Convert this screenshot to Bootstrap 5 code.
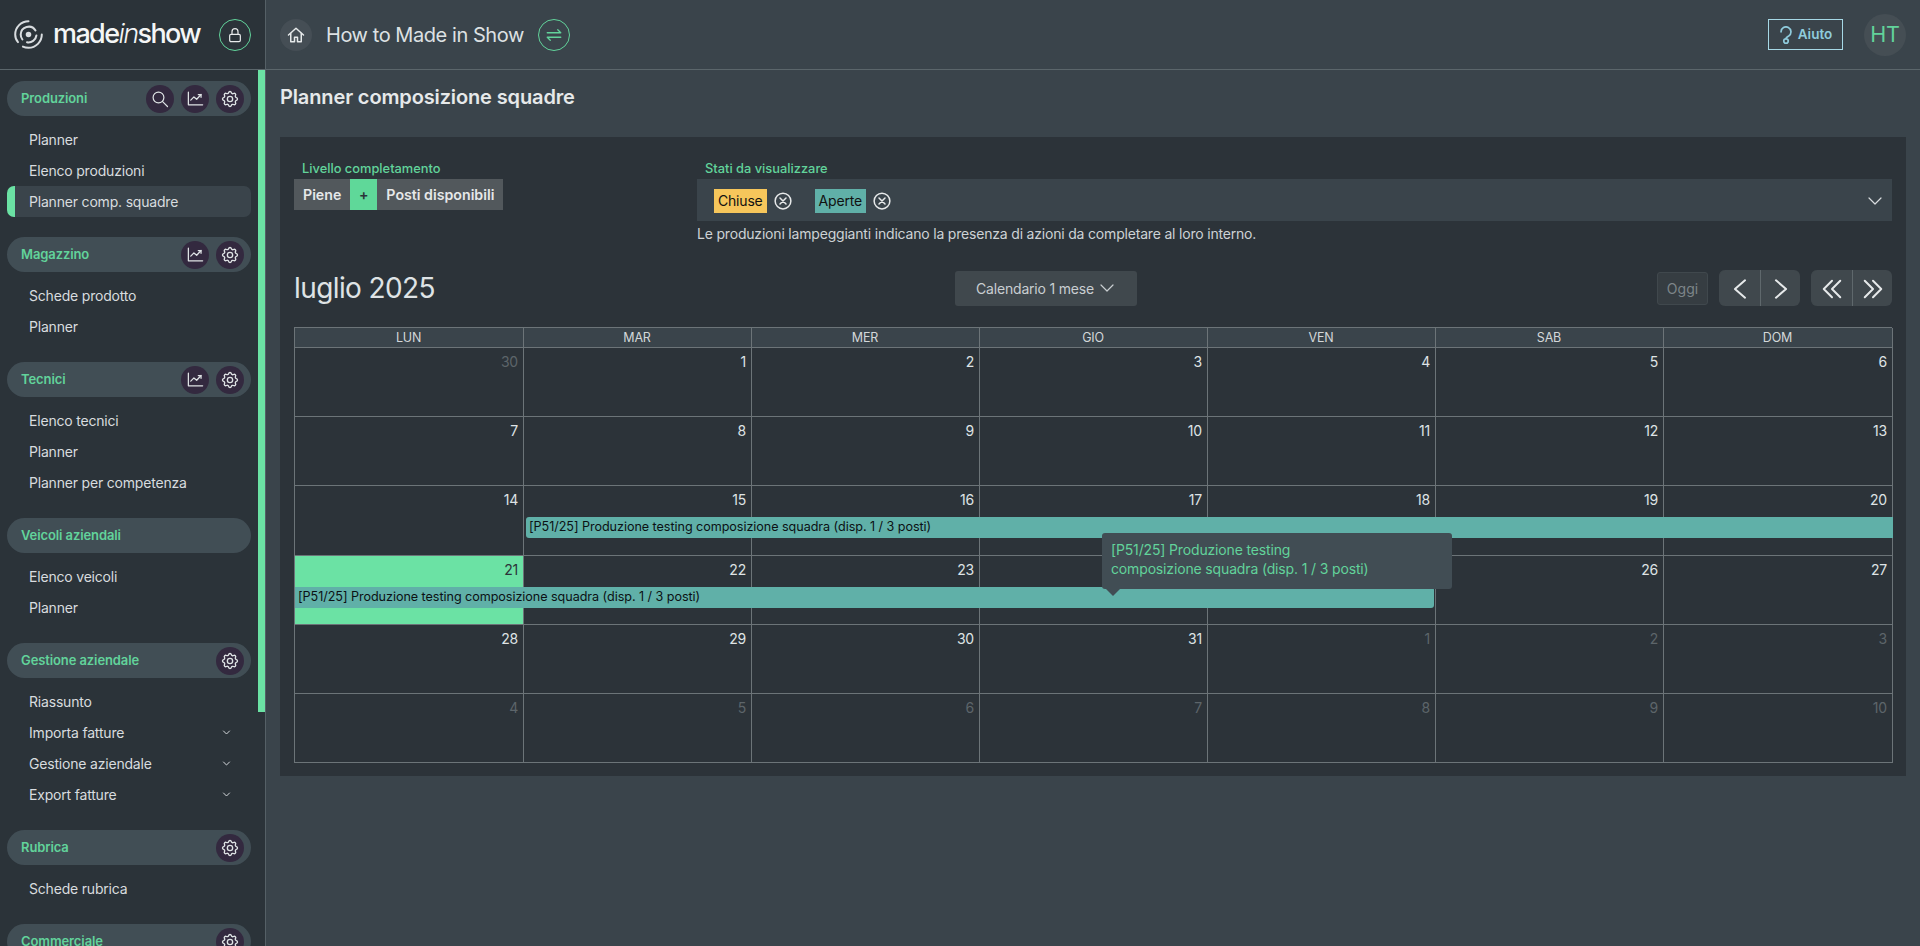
<!DOCTYPE html>
<html lang="it">
<head>
    <meta charset="UTF-8">
    <title>Planner composizione squadre</title>
    <link href="https://cdn.jsdelivr.net/npm/bootstrap@5.3.0/dist/css/bootstrap.min.css" rel="stylesheet">
    <style>
        body { background: #3a444b; color: #d8dcdf; font-family: Inter, "Liberation Sans", sans-serif; font-size: 14px; letter-spacing: -0.19px; height: 946px; overflow: hidden; }
        .ico { fill: none; stroke: currentColor; stroke-width: 1.6; stroke-linecap: round; stroke-linejoin: round; flex: none; }

        /* Sidebar */
        .side-col { width: 266px; height: 946px; background: #2b3339; border-right: 1px solid #556066; flex: none; overflow: hidden; }
        .side-top { height: 70px; border-bottom: 1px solid #5b666b; padding: 0 14px 0 14px; }
        .brand-name { font-size: 27px; font-weight: 500; color: #f4f6f6; letter-spacing: -1.6px; margin-left: 10px; line-height: 1; padding-bottom: 3px; }
        .brand-name i { font-weight: 300; }
        .round-line { width: 32px; height: 32px; border-radius: 50%; border: 1px solid #62d39b; }
        .side-thumb { width: 7px; height: 642px; background: #6be2a4; flex: none; }
        .side-list { width: 258px; padding: 11px 7px 0 7px; flex: none; }
        .sec-pill { height: 35px; border-radius: 18px; background: #414e55; padding: 0 7px 0 14px; gap: 7px; margin-top: 20px; }
        .sec-pill:first-child { margin-top: 0; }
        .sec-name { font-size: 13px; font-weight: 600; color: #62d39b; margin-right: auto; letter-spacing: -0.1px; }
        .sec-btn { width: 28px; height: 28px; border-radius: 50%; background: #33293f; color: #dfe3e5; }
        .sec-items { margin-top: 8px; }
        .sec-link { height: 31px; padding-left: 22px; padding-right: 20px; color: #d8dcdf; }
        .sec-link.on { background: #3a444b; border-left: 8px solid #6be2a4; border-radius: 7px; padding-left: 14px; }

        /* Header */
        .top-bar { height: 70px; border-bottom: 1px solid #5b666b; padding: 0 14px 0 14px; }
        .home-round { width: 32px; height: 32px; border-radius: 50%; background: #454e55; color: #e6e9ea; }
        .top-title { font-size: 20px; letter-spacing: -0.44px; color: #dde1e3; margin: 0 14px 0 14px; font-weight: 400; }
        .help-btn { width: 75px; height: 31px; border: 1px solid #a6d9e6; color: #8fcbdc; font-size: 13.5px; font-weight: 600; gap: 5px; margin-right: 21px; letter-spacing: 0; }
        .user-round { width: 42px; height: 42px; border-radius: 50%; background: #454e54; color: #62d39b; font-size: 21.5px; }

        /* Main card */
        .page-title { font-size: 20px; letter-spacing: -0.13px; font-weight: 600; color: #e6e9ea; margin: 0; padding: 15px 14px 0 14px; height: 67px; line-height: 24px; }
        .main-panel { margin: 0 14px; height: 639px; background: #2c3339; padding: 24px 14px 0 14px; }
        .filter-left { width: 403px; flex: none; }
        .filter-right { flex: 1; }
        .field-label { font-size: 12.85px; font-weight: 500; letter-spacing: 0; color: #62d39b; height: 18px; line-height: 16px; padding-left: 8px; }
        .toggle-part { height: 31px; background: #52585c; color: #e6e8e9; font-size: 14.2px; letter-spacing: 0; font-weight: 600; padding: 0 9px; }
        .toggle-plus { width: 27px; background: #5fd899; color: #2c3339; justify-content: center; padding: 0; }
        .pick-box { height: 42px; background: #3a444b; padding: 1px 8px 0 17px; }
        .state-tag { height: 24px; color: #111; font-size: 14px; padding: 0 4px; }
        .state-tag.t-closed { background: #f6c65b; }
        .state-tag.t-open { background: #60b0a8; }
        .x-gap { margin: 0 23px 0 7px; color: #e8eaeb; stroke-width: 2; }
        .hint-line { line-height: 20px; margin-top: 3px; color: #cdd2d5; }

        .cal-bar { margin-top: 26px; height: 36px; margin-bottom: 21px; }
        .cal-month { width: 661px; font-size: 28px; letter-spacing: -0.6px; font-weight: 400; color: #dfe3e5; margin: 0; padding-top: 2px; }
        .btn.view-btn { width: 182px; height: 35px; background: #40484d; border: 0; color: #c9ced1; font-size: 14px; letter-spacing: -0.19px; border-radius: 3px; }
        .btn.today-btn { width: 51px; height: 33px; padding: 0; background: #363d42; border: 1px solid #40484d; color: #7d8589; font-size: 14px; opacity: 1; border-radius: 3px; margin-right: 11px; }
        .nav-pair { margin-right: 11px; }
        .nav-pair:last-child { margin-right: 0; }
        .btn-group .btn.nav-btn { width: 41px; height: 36px; padding: 0; background: #40484d; border: 0; border-left: 1px solid #40484d; color: #e6e9ea; }
        .btn-group .btn.nav-btn + .btn.nav-btn { border-left: 1px solid #5f686c; margin-left: 0; width: 40px; }

        .cal-wrap { position: relative; border-left: 1px solid #6c7478; border-top: 1px solid #6c7478; width: 1598px; }
        .cal-line { display: grid; grid-template-columns: 229px repeat(5, 228px) 229px; }
        .cal-head { height: 20px; background: #3a444b; text-align: center; font-size: 12.5px; line-height: 20px; padding-right: 1px; color: #d3d7d9; border-right: 1px solid #6c7478; border-bottom: 1px solid #6c7478; }
        .cal-day { grid-row: 1; height: 69.2px; border-right: 1px solid #6c7478; border-bottom: 1px solid #6c7478; text-align: right; padding: 5px 5px 0 0; font-size: 14px; line-height: 18px; color: #dfe3e5; }
        .cal-day:nth-child(1) { grid-column: 1; }
        .cal-day:nth-child(2) { grid-column: 2; }
        .cal-day:nth-child(3) { grid-column: 3; }
        .cal-day:nth-child(4) { grid-column: 4; }
        .cal-day:nth-child(5) { grid-column: 5; }
        .cal-day:nth-child(6) { grid-column: 6; }
        .cal-day:nth-child(7) { grid-column: 7; }
        .cal-day.off { color: #5d656a; }
        .cal-day.now { background: #6be2a4; color: #2c3339; }
        .cal-event { grid-row: 1; height: 21px; margin-top: 31px; background: #60b0a8; color: #0c1114; font-size: 12.6px; letter-spacing: -0.05px; line-height: 20px; padding-left: 3px; white-space: nowrap; align-self: start; z-index: 1; }
        .ev-one { grid-column: 2 / 8; margin-left: 2px; border-radius: 3px 0 0 3px; }
        .ev-two { grid-column: 1 / 6; margin-right: 2px; border-radius: 0 3px 3px 0; }
        .cal-tip { position: absolute; left: 807px; top: 205px; width: 350px; height: 56px; background: #414d54; color: #62d39b; font-size: 14px; letter-spacing: -0.15px; line-height: 19px; padding: 7px 9px; border-radius: 3px; z-index: 2; }
        .cal-tip::after { content: ""; position: absolute; left: 4px; bottom: -7px; border: 7px solid transparent; border-bottom: 0; border-top-color: #414d54; }
    </style>
</head>
<body>
    <svg width="0" height="0" class="position-absolute">
        <symbol id="i-gear" viewBox="0 0 24 24"><path d="M10.325 4.317c.426 -1.756 2.924 -1.756 3.35 0a1.724 1.724 0 0 0 2.573 1.066c1.543 -.94 3.31 .826 2.37 2.37a1.724 1.724 0 0 0 1.065 2.572c1.756 .426 1.756 2.924 0 3.35a1.724 1.724 0 0 0 -1.066 2.573c.94 1.543 -.826 3.31 -2.37 2.37a1.724 1.724 0 0 0 -2.572 1.065c-.426 1.756 -2.924 1.756 -3.35 0a1.724 1.724 0 0 0 -2.573 -1.066c-1.543 .94 -3.31 -.826 -2.37 -2.37a1.724 1.724 0 0 0 -1.065 -2.572c-1.756 -.426 -1.756 -2.924 0 -3.35a1.724 1.724 0 0 0 1.066 -2.573c-.94 -1.543 .826 -3.31 2.37 -2.37c1 .608 2.296 .07 2.572 -1.065z"/><circle cx="12" cy="12" r="3.2"/></symbol>
        <symbol id="i-chart" viewBox="0 0 24 24"><path d="M3 4v16h18"/><path d="M6 14l4-4 3.500 3 5.500-6"/><path d="M15.500 7H19v3.500"/></symbol>
        <symbol id="i-search" viewBox="0 0 24 24"><circle cx="10" cy="10" r="7.2"/><path d="M15.500 15.500L22 22"/></symbol>
        <symbol id="i-x" viewBox="0 0 24 24"><circle cx="12" cy="12" r="10.500"/><path d="M8 8l8 8M16 8l-8 8"/></symbol>
        <symbol id="i-down" viewBox="0 0 24 24"><path d="M4 8l8 8 8-8"/></symbol>
    </svg>

    <div class="d-flex">
        <!-- Sidebar -->
        <aside class="side-col">
            <div class="side-top d-flex align-items-center">
                <svg width="29" height="29" viewBox="0 0 29 29" class="ico" style="stroke-width:2"><path d="M14.500 1.200A13.300 13.300 0 0 0 1.200 14.500c0 3.200 1 5.600 2.800 7.600"/><path d="M27.800 14.500a13.300 13.300 0 0 1-13.300 13.300c-2.200 0-4-.4-5.600-1.200"/><path d="M21.500 10.500a8 8 0 0 0-14.800 4c0 2 .6 3.600 1.700 5"/><path d="M22.400 15.500a8 8 0 0 1-9.400 6.800"/><circle cx="14.500" cy="14.500" r="1.800" fill="currentColor"/></svg>
                <span class="brand-name">made<i>in</i>show</span>
                <span class="round-line d-flex align-items-center justify-content-center ms-auto" style="color:#e8eaeb">
                    <svg width="16" height="16" viewBox="0 0 24 24" class="ico" style="stroke-width:1.8"><rect x="4" y="11" width="16" height="11" rx="2"/><path d="M7.500 11V7a4.500 4.500 0 0 1 9 0v4"/></svg>
                </span>
            </div>
            <div class="d-flex">
                <nav class="side-list">
                    <div class="sec-pill d-flex align-items-center">
                        <span class="sec-name">Produzioni</span>
                        <span class="sec-btn d-flex align-items-center justify-content-center"><svg width="18" height="18" class="ico"><use href="#i-search"/></svg></span>
                        <span class="sec-btn d-flex align-items-center justify-content-center"><svg width="19" height="19" class="ico"><use href="#i-chart"/></svg></span>
                        <span class="sec-btn d-flex align-items-center justify-content-center"><svg width="20" height="20" class="ico"><use href="#i-gear"/></svg></span>
                    </div>
                    <div class="sec-items">
                        <div class="sec-link d-flex align-items-center">Planner</div>
                        <div class="sec-link d-flex align-items-center">Elenco produzioni</div>
                        <div class="sec-link on d-flex align-items-center">Planner comp. squadre</div>
                    </div>

                    <div class="sec-pill d-flex align-items-center">
                        <span class="sec-name">Magazzino</span>
                        <span class="sec-btn d-flex align-items-center justify-content-center"><svg width="19" height="19" class="ico"><use href="#i-chart"/></svg></span>
                        <span class="sec-btn d-flex align-items-center justify-content-center"><svg width="20" height="20" class="ico"><use href="#i-gear"/></svg></span>
                    </div>
                    <div class="sec-items">
                        <div class="sec-link d-flex align-items-center">Schede prodotto</div>
                        <div class="sec-link d-flex align-items-center">Planner</div>
                    </div>

                    <div class="sec-pill d-flex align-items-center">
                        <span class="sec-name">Tecnici</span>
                        <span class="sec-btn d-flex align-items-center justify-content-center"><svg width="19" height="19" class="ico"><use href="#i-chart"/></svg></span>
                        <span class="sec-btn d-flex align-items-center justify-content-center"><svg width="20" height="20" class="ico"><use href="#i-gear"/></svg></span>
                    </div>
                    <div class="sec-items">
                        <div class="sec-link d-flex align-items-center">Elenco tecnici</div>
                        <div class="sec-link d-flex align-items-center">Planner</div>
                        <div class="sec-link d-flex align-items-center">Planner per competenza</div>
                    </div>

                    <div class="sec-pill d-flex align-items-center">
                        <span class="sec-name">Veicoli aziendali</span>
                    </div>
                    <div class="sec-items">
                        <div class="sec-link d-flex align-items-center">Elenco veicoli</div>
                        <div class="sec-link d-flex align-items-center">Planner</div>
                    </div>

                    <div class="sec-pill d-flex align-items-center">
                        <span class="sec-name">Gestione aziendale</span>
                        <span class="sec-btn d-flex align-items-center justify-content-center"><svg width="20" height="20" class="ico"><use href="#i-gear"/></svg></span>
                    </div>
                    <div class="sec-items">
                        <div class="sec-link d-flex align-items-center">Riassunto</div>
                        <div class="sec-link d-flex align-items-center justify-content-between">Importa fatture <svg width="9" height="9" class="ico" style="stroke-width:2.6"><use href="#i-down"/></svg></div>
                        <div class="sec-link d-flex align-items-center justify-content-between">Gestione aziendale <svg width="9" height="9" class="ico" style="stroke-width:2.6"><use href="#i-down"/></svg></div>
                        <div class="sec-link d-flex align-items-center justify-content-between">Export fatture <svg width="9" height="9" class="ico" style="stroke-width:2.6"><use href="#i-down"/></svg></div>
                    </div>

                    <div class="sec-pill d-flex align-items-center">
                        <span class="sec-name">Rubrica</span>
                        <span class="sec-btn d-flex align-items-center justify-content-center"><svg width="20" height="20" class="ico"><use href="#i-gear"/></svg></span>
                    </div>
                    <div class="sec-items">
                        <div class="sec-link d-flex align-items-center">Schede rubrica</div>
                    </div>

                    <div class="sec-pill d-flex align-items-center">
                        <span class="sec-name">Commerciale</span>
                        <span class="sec-btn d-flex align-items-center justify-content-center"><svg width="20" height="20" class="ico"><use href="#i-gear"/></svg></span>
                    </div>
                </nav>
                <div class="side-thumb"></div>
            </div>
        </aside>

        <!-- Main -->
        <div class="flex-grow-1">
            <header class="top-bar d-flex align-items-center">
                <span class="home-round d-flex align-items-center justify-content-center">
                    <svg width="18" height="18" viewBox="0 0 24 24" class="ico" style="stroke-width:2"><path d="M2 12L12 3l10 9"/><path d="M5 10v11h5v-6h4v6h5V10"/></svg>
                </span>
                <span class="top-title">How to Made in Show</span>
                <span class="round-line d-flex align-items-center justify-content-center" style="color:#62d39b">
                    <svg width="18" height="18" viewBox="0 0 24 24" class="ico" style="stroke-width:1.8"><path d="M3 9h18M17 5l4 4M21 15H3M7 19l-4-4"/></svg>
                </span>
                <span class="help-btn d-flex align-items-center justify-content-center ms-auto">
                    <svg width="14" height="18" viewBox="0 0 14 20" class="ico" style="stroke-width:1.9"><path d="M1.500 6.500a5.500 5.500 0 1 1 8.500 4.600C8 12.300 7 12.800 7 14"/><circle cx="7" cy="16.800" r="2.500"/></svg>
                    Aiuto
                </span>
                <span class="user-round d-flex align-items-center justify-content-center">HT</span>
            </header>

            <h1 class="page-title">Planner composizione squadre</h1>

            <section class="main-panel">
                <div class="d-flex">
                    <div class="filter-left">
                        <div class="field-label">Livello completamento</div>
                        <div class="d-flex">
                            <span class="toggle-part d-flex align-items-center">Piene</span>
                            <span class="toggle-part toggle-plus d-flex align-items-center">+</span>
                            <span class="toggle-part d-flex align-items-center">Posti disponibili</span>
                        </div>
                    </div>
                    <div class="filter-right">
                        <div class="field-label">Stati da visualizzare</div>
                        <div class="pick-box d-flex align-items-center">
                            <span class="state-tag t-closed d-flex align-items-center">Chiuse</span>
                            <svg width="18" height="18" class="ico x-gap"><use href="#i-x"/></svg>
                            <span class="state-tag t-open d-flex align-items-center">Aperte</span>
                            <svg width="18" height="18" class="ico x-gap"><use href="#i-x"/></svg>
                            <svg width="18" height="18" class="ico ms-auto" style="color:#d8dcdf"><use href="#i-down"/></svg>
                        </div>
                        <div class="hint-line">Le produzioni lampeggianti indicano la presenza di azioni da completare al loro interno.</div>
                    </div>
                </div>

                <div class="cal-bar d-flex align-items-center">
                    <h2 class="cal-month">luglio 2025</h2>
                    <button class="btn view-btn d-flex align-items-center justify-content-center gap-1" type="button">Calendario 1 mese <svg width="18" height="18" class="ico"><use href="#i-down"/></svg></button>
                    <div class="ms-auto d-flex align-items-center">
                        <button class="btn today-btn" type="button" disabled>Oggi</button>
                        <div class="btn-group nav-pair">
                            <button class="btn nav-btn" type="button"><svg width="22" height="22" viewBox="0 0 24 24" class="ico" style="stroke-width:2.2"><path d="M17.500 2.500L6.500 12l11 9.500"/></svg></button>
                            <button class="btn nav-btn" type="button"><svg width="22" height="22" viewBox="0 0 24 24" class="ico" style="stroke-width:2.2"><path d="M6.500 2.500l11 9.500-11 9.500"/></svg></button>
                        </div>
                        <div class="btn-group nav-pair">
                            <button class="btn nav-btn" type="button"><svg width="22" height="22" viewBox="0 0 24 24" class="ico" style="stroke-width:2.2"><path d="M12 3l-9 9 9 9M21 3l-9 9 9 9"/></svg></button>
                            <button class="btn nav-btn" type="button"><svg width="22" height="22" viewBox="0 0 24 24" class="ico" style="stroke-width:2.2"><path d="M3 3l9 9-9 9M12 3l9 9-9 9"/></svg></button>
                        </div>
                    </div>
                </div>

                <div class="cal-wrap">
                    <div class="cal-line">
                        <div class="cal-head">LUN</div><div class="cal-head">MAR</div><div class="cal-head">MER</div><div class="cal-head">GIO</div><div class="cal-head">VEN</div><div class="cal-head">SAB</div><div class="cal-head">DOM</div>
                    </div>
                    <div class="cal-line">
                        <div class="cal-day off">30</div><div class="cal-day">1</div><div class="cal-day">2</div><div class="cal-day">3</div><div class="cal-day">4</div><div class="cal-day">5</div><div class="cal-day">6</div>
                    </div>
                    <div class="cal-line">
                        <div class="cal-day">7</div><div class="cal-day">8</div><div class="cal-day">9</div><div class="cal-day">10</div><div class="cal-day">11</div><div class="cal-day">12</div><div class="cal-day">13</div>
                    </div>
                    <div class="cal-line">
                        <div class="cal-day">14</div><div class="cal-day">15</div><div class="cal-day">16</div><div class="cal-day">17</div><div class="cal-day">18</div><div class="cal-day">19</div><div class="cal-day">20</div>
                        <div class="cal-event ev-one">[P51/25] Produzione testing composizione squadra (disp. 1 / 3 posti)</div>
                    </div>
                    <div class="cal-line">
                        <div class="cal-day now">21</div><div class="cal-day">22</div><div class="cal-day">23</div><div class="cal-day">24</div><div class="cal-day">25</div><div class="cal-day">26</div><div class="cal-day">27</div>
                        <div class="cal-event ev-two">[P51/25] Produzione testing composizione squadra (disp. 1 / 3 posti)</div>
                    </div>
                    <div class="cal-line">
                        <div class="cal-day">28</div><div class="cal-day">29</div><div class="cal-day">30</div><div class="cal-day">31</div><div class="cal-day off">1</div><div class="cal-day off">2</div><div class="cal-day off">3</div>
                    </div>
                    <div class="cal-line">
                        <div class="cal-day off">4</div><div class="cal-day off">5</div><div class="cal-day off">6</div><div class="cal-day off">7</div><div class="cal-day off">8</div><div class="cal-day off">9</div><div class="cal-day off">10</div>
                    </div>
                    <div class="cal-tip">[P51/25] Produzione testing<br>composizione squadra (disp. 1 / 3 posti)</div>
                </div>
            </section>
        </div>
    </div>

    <script src="https://cdn.jsdelivr.net/npm/bootstrap@5.3.0/dist/js/bootstrap.bundle.min.js"></script>
</body>
</html>
